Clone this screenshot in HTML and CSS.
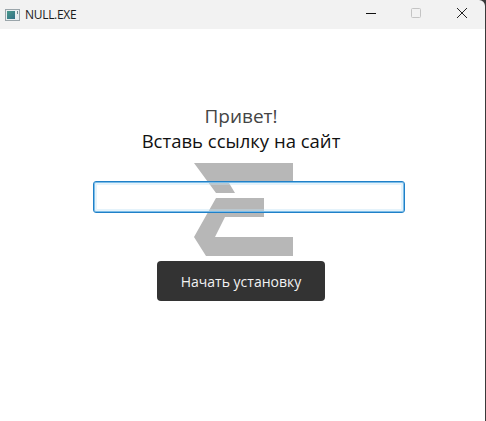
FILE: index.html
```html
<!DOCTYPE html>
<html lang="ru">
<head>
<meta charset="utf-8">
<title>NULL.EXE</title>
<link rel="stylesheet" href="styles.css">
</head>
<body>
<div class="window">
  <header class="titlebar">
    <svg class="app-icon" width="16" height="14" viewBox="0 0 16 14">
      <defs><linearGradient id="g" x1="0" y1="0" x2="1" y2="1"><stop offset="0" stop-color="#4a9a8c"/><stop offset="1" stop-color="#2f6f86"/></linearGradient></defs>
      <rect x="0.5" y="1.5" width="14" height="11" fill="#e8eef0" stroke="#9aa5aa"/>
      <rect x="2" y="3" width="8" height="8" fill="url(#g)"/>
      <rect x="12" y="3" width="1" height="3" fill="#6f8a90"/>
    </svg>
    <span class="title">NULL.EXE</span>
    <div class="controls">
      <svg class="ctl" width="46" height="29" viewBox="0 0 46 29"><path d="M19 13.5H29" stroke="#111" stroke-width="1"/></svg>
      <svg class="ctl" width="46" height="29" viewBox="0 0 46 29"><rect x="18.5" y="8.5" width="9" height="9" rx="1" fill="none" stroke="#c4c4c4"/></svg>
      <svg class="ctl" width="46" height="29" viewBox="0 0 46 29"><path d="M18 8L28 18M28 8L18 18" stroke="#222" stroke-width="1"/></svg>
    </div>
  </header>
  <main class="content">
    <h1 class="greeting">Привет!</h1>
    <p class="prompt">Вставь ссылку на сайт</p>
    <div class="field">
      <svg class="sigma" width="99" height="93" viewBox="0 0 99 93">
        <path d="M0 0H99V20H35L41 30H22Z" fill="#b7b7b7"/>
        <path d="M22 35H70V54H31L21 74H99V93H12L0 74Z" fill="#b7b7b7"/>
      </svg>
      <input class="url" type="text" aria-label="Ссылка на сайт">
    </div>
    <button class="install" type="button">Начать установку</button>
  </main>
</div>
</body>
</html>
```
FILE: styles.css
```css
* { box-sizing: border-box; }
html, body { margin: 0; height: 100%; background: #fff; }
.window {
  height: 421px;
  width: 486px;
  display: flex;
  flex-direction: column;
  border-right: 1px solid #3a3a3a;
  background: #3a3a3a;
  font-family: "Open Sans", "Noto Sans", sans-serif;
  overflow: hidden;
}
.titlebar {
  height: 29px;
  flex: none;
  background: #f2f2f2;
  border-top-right-radius: 6px;
  display: flex;
  align-items: center;
  padding-left: 5px;
}
.app-icon { flex: none; }
.title {
  margin-left: 4px;
  font-size: 12px;
  color: #1a1a1a;
  letter-spacing: -0.3px;
}
.controls { margin-left: auto; display: flex; }
.ctl { display: block; }
.content {
  flex: 1;
  display: flex;
  flex-direction: column;
  align-items: center;
  padding: 74px 3px 0 0;
  background: #fff;
}
.greeting {
  margin: 0;
  font-size: 19px;
  font-weight: 400;
  line-height: 26px;
  color: #444;
}
.prompt {
  margin: 0;
  font-size: 18.5px;
  line-height: 24px;
  color: #111;
}
.field {
  position: relative;
  margin: 28px 0 0 16px;
  width: 312px;
  height: 32px;
}
.sigma {
  position: absolute;
  left: 101px;
  top: -18px;
}
.url {
  position: relative;
  display: block;
  width: 100%;
  height: 100%;
  background: transparent;
  border: 1px solid #1f80c8;
  border-radius: 3px;
  box-shadow: inset 0 0 0 1px #7dbde8, inset 0 0 0 3px rgba(190, 225, 245, 0.4);
  outline: none;
}
.install {
  margin-top: 48px;
  width: 168px;
  height: 40px;
  background: #333;
  color: #f2f2f2;
  border: none;
  border-radius: 4px;
  font-family: inherit;
  font-size: 14px;
}
```
